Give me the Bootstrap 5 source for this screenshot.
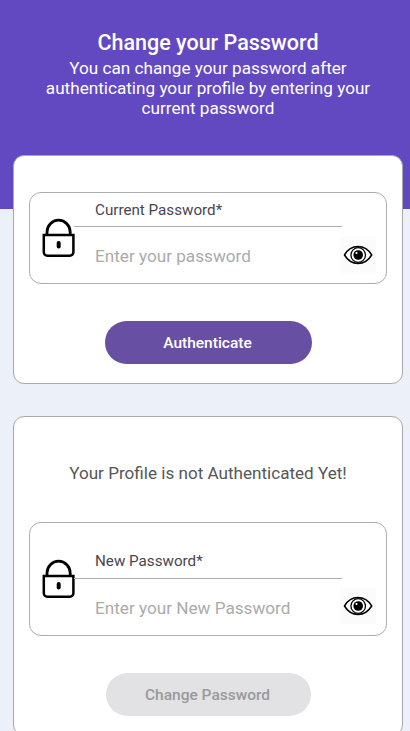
<!DOCTYPE html>
<html lang="en">
<head>
<meta charset="utf-8">
<meta name="viewport" content="width=device-width, initial-scale=1">
<title>Change your Password</title>
<link href="https://cdn.jsdelivr.net/npm/bootstrap@5.3.0/dist/css/bootstrap.min.css" rel="stylesheet">
<style>
  body { font-family: Roboto, "Liberation Sans", sans-serif; background: #ecf0f9; height: 731px; overflow: hidden; }
  .hero { background: #6349c1; height: 208.5px; padding-top: 30px; padding-left: 6px; }
  .hero h1 { font-size: 21.5px; line-height: 26px; font-weight: 500; margin-bottom: 2px; }
  .hero p { font-size: 17.15px; line-height: 20px; width: 350px; }
  .stack { margin: -53.5px 7px 0 13px; gap: 32px; }
  .panel { border: 1px solid #a8a8a8; border-radius: 11px; padding: 0 15px; }
  .panel-current { height: 229px; padding-top: 36px; }
  .panel-new { height: 320px; padding-top: 45.5px; }
  .field { border: 1px solid #adadad; border-radius: 12px; padding-left: 12px; }
  .field-current { height: 92px; }
  .field-new { height: 113.5px; padding-top: 21px; }
  .lock { width: 33px; height: 40px; margin-top: 25px; }
  .field-new .lock { margin-top: 15px; }
  .entry { width: 268px; margin-left: -1px; }
  .entry label { font-size: 15.2px; line-height: 20px; height: 34px; padding: 7px 0 0 21px; color: #49454f; border-bottom: 1px solid #acacac; }
  .entry input { font-size: 17.15px; height: 58px; padding: 0 0 0 21px; }
  .field-new label { height: 35px; padding-top: 7px; }
  .entry input::placeholder { color: #ababab; opacity: 1; }
  .field-new input { height: 57px; }
  .eye { width: 36px; height: 36px; margin: 44px 0 0 -2px; background: #fbfbfb; }
  .notice { font-size: 17.1px; line-height: 20px; margin-bottom: 39.5px; color: #565656; }
  .action { height: 43px; font-size: 15.5px; font-weight: 500; }
  .btn.action { padding: 3px 1px 0 0; }
  .action-auth { width: 207px; margin-top: 37px; background: #6750a4; color: #fff; }
  .action-change, .action-change:disabled { width: 205px; margin-top: 37px; background: #e2e2e4; color: #99999b; opacity: 1; border: 0; }
</style>
</head>
<body>
<svg class="d-none" aria-hidden="true">
  <symbol id="lock" viewBox="0 0 33 40">
    <g fill="none" stroke="#000">
      <path d="M5 17V14a11.6 11.8 0 0 1 23.2 0v3" stroke-width="2.8"/>
      <path d="M1.8 17h29.6v17.2a3.5 3.5 0 0 1-3.5 3.5H5.300a3.500 3.500 0 0 1-3.500-3.500z" stroke-width="2.5"/>
    </g>
    <rect x="14.700" y="23" width="4" height="7.500" rx="2"/>
  </symbol>
  <symbol id="eye" viewBox="0 0 36 36">
    <path d="M4.500 18C11 6.800 25 6.800 31.700 18C25 29.200 11 29.200 4.500 18z" fill="#fff" stroke="#000" stroke-width="1.500"/>
    <circle cx="18.200" cy="18" r="7.300" fill="#fff" stroke="#000" stroke-width="1.300"/>
    <circle cx="18.200" cy="18" r="4.800"/>
    <circle cx="16.500" cy="16" r="1.100" fill="#fff"/>
  </symbol>
</svg>
<header class="hero text-white text-center">
  <h1>Change your Password</h1>
  <p class="mx-auto mb-0">You can change your password after authenticating your profile by entering your current password</p>
</header>
<main class="stack d-flex flex-column">
  <section class="panel panel-current bg-white">
    <div class="field field-current d-flex align-items-start">
      <svg class="lock flex-shrink-0"><use href="#lock"/></svg>
      <div class="entry d-flex flex-column flex-shrink-0">
        <label for="current">Current Password*</label>
        <input id="current" type="password" class="form-control border-0 bg-transparent shadow-none" placeholder="Enter your password">
      </div>
      <svg class="eye flex-shrink-0"><use href="#eye"/></svg>
    </div>
    <button type="button" class="btn action action-auth rounded-pill border-0 d-block mx-auto">Authenticate</button>
  </section>
  <section class="panel panel-new bg-white">
    <p class="notice text-center">Your Profile is not Authenticated Yet!</p>
    <div class="field field-new d-flex align-items-start">
      <svg class="lock flex-shrink-0"><use href="#lock"/></svg>
      <div class="entry d-flex flex-column flex-shrink-0">
        <label for="new">New Password*</label>
        <input id="new" type="password" class="form-control border-0 bg-transparent shadow-none" placeholder="Enter your New Password">
      </div>
      <svg class="eye flex-shrink-0"><use href="#eye"/></svg>
    </div>
    <button type="button" disabled class="btn action action-change rounded-pill d-block mx-auto">Change Password</button>
  </section>
</main>
<script src="https://cdn.jsdelivr.net/npm/bootstrap@5.3.0/dist/js/bootstrap.bundle.min.js"></script>
</body>
</html>
